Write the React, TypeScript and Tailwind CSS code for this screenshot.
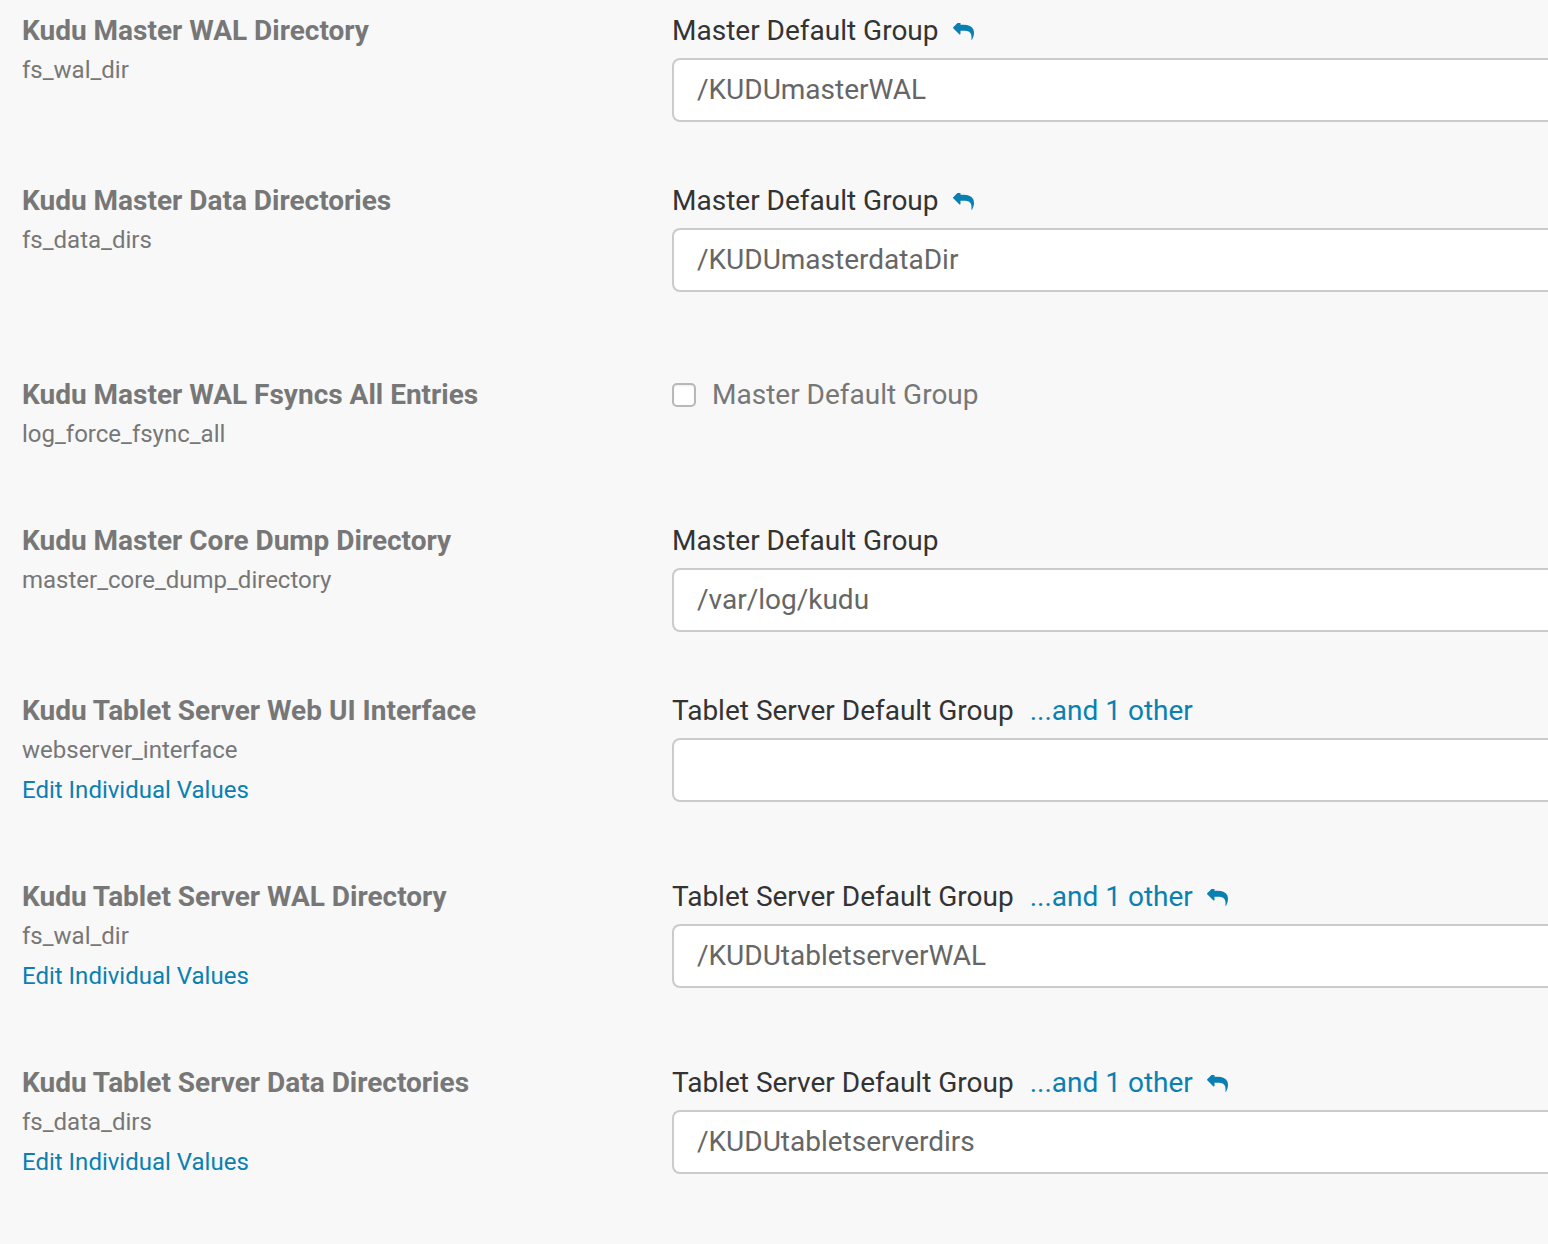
type Row = {
  title: string;
  key: string;
  edit?: boolean;
  group: string;
  other?: boolean;
  reset?: boolean;
  value?: string;
  checkbox?: boolean;
  height: string;
};

const ROWS: Row[] = [
  { title: "Kudu Master WAL Directory", key: "fs_wal_dir", group: "Master Default Group", reset: true, value: "/KUDUmasterWAL", height: "h-[170px]" },
  { title: "Kudu Master Data Directories", key: "fs_data_dirs", group: "Master Default Group", reset: true, value: "/KUDUmasterdataDir", height: "h-[194px]" },
  { title: "Kudu Master WAL Fsyncs All Entries", key: "log_force_fsync_all", group: "Master Default Group", checkbox: true, height: "h-[146px]" },
  { title: "Kudu Master Core Dump Directory", key: "master_core_dump_directory", group: "Master Default Group", value: "/var/log/kudu", height: "h-[170px]" },
  { title: "Kudu Tablet Server Web UI Interface", key: "webserver_interface", edit: true, group: "Tablet Server Default Group", other: true, value: "", height: "h-[186px]" },
  { title: "Kudu Tablet Server WAL Directory", key: "fs_wal_dir", edit: true, group: "Tablet Server Default Group", other: true, reset: true, value: "/KUDUtabletserverWAL", height: "h-[186px]" },
  { title: "Kudu Tablet Server Data Directories", key: "fs_data_dirs", edit: true, group: "Tablet Server Default Group", other: true, reset: true, value: "/KUDUtabletserverdirs", height: "h-[186px]" },
];

// font-awesome 4 style "reply" arrow
function ReplyIcon() {
  return (
    <svg viewBox="0 256 1792 1400" className="ml-[14px] h-[17px] w-[21px] text-[#0a80b2]" fill="currentColor">
      <path d="M1792 1120q0 166-127 451-3 7-10.5 24t-13.5 30-13 22q-12 17-28 17-15 0-23.5-10t-8.5-25q0-9 2.5-26.5t2.5-23.5q5-68 5-123 0-101-17.5-181t-48.5-138.5-80-101-105.5-69.5-133-42.5-154-21.5-175.5-6h-224v256q0 26-19 45t-45 19-45-19l-512-512q-19-19-19-45t19-45l512-512q19-19 45-19t45 19 19 45v256h224q713 0 875 403 53 134 53 333z" />
    </svg>
  );
}

export default function App() {
  return (
    <div className="min-h-[1244px] w-full overflow-hidden bg-[#f8f8f8] pt-[16px] font-['Roboto',sans-serif]">
      {ROWS.map((row, i) => (
        <div key={i} className={`grid grid-cols-[672px_1fr] ${row.height}`}>
          {/* left side */}
          <div className="pl-[22px]">
            <p className="text-[28px] leading-[30px] font-bold text-[#777]">{row.title}</p>
            <p className="mt-[10px] text-[24px] leading-[28px] text-[#777]">{row.key}</p>
            {row.edit && (
              <a className="mt-[12px] block text-[24px] leading-[28px] text-[#0a80b2] cursor-pointer">
                Edit Individual Values
              </a>
            )}
          </div>

          {/* right side */}
          <div>
            {row.checkbox ? (
              <label className="flex items-center gap-4">
                <span className="h-[24px] w-[24px] rounded-[5px] border-2 border-[#b8b8b8] bg-white shadow-[inset_0_1px_2px_rgba(0,0,0,0.08)]"></span>
                <span className="text-[28px] leading-[30px] text-[#777]">{row.group}</span>
              </label>
            ) : (
              <>
                <div className="flex items-center">
                  <span className="text-[28px] leading-[30px] text-[#333]">{row.group}</span>
                  {row.other && (
                    <a className="ml-4 text-[28px] leading-[30px] text-[#0a80b2] cursor-pointer">...and 1 other</a>
                  )}
                  {row.reset && <ReplyIcon />}
                </div>
                <div className="mt-[12px] flex h-[64px] items-center rounded-l-lg border-2 border-r-0 border-[#cbcbcb] bg-white pl-[23px] text-[28px] text-[#666]">
                  {row.value}
                </div>
              </>
            )}
          </div>
        </div>
      ))}
    </div>
  );
}
